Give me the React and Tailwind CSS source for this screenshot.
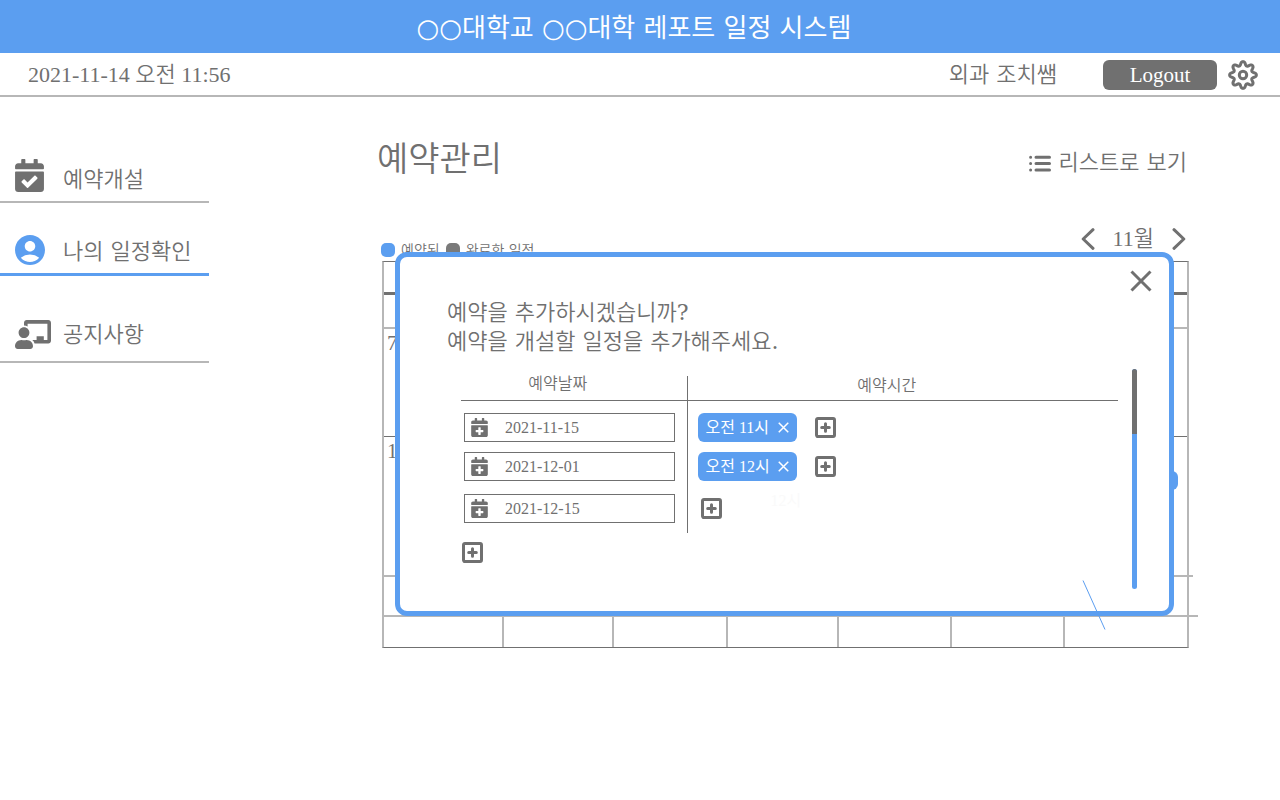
import { FaCalendarCheck, FaCalendarPlus, FaChalkboardTeacher } from "react-icons/fa";
import { MdAccountCircle } from "react-icons/md";

const GEAR_PATH =
  Array.from({ length: 96 }, (_, i) => {
    const a = (i / 96) * Math.PI * 2;
    const wave = Math.cos(8 * a);
    const r = 11.5 + 1.9 * Math.sign(wave) * Math.pow(Math.abs(wave), 0.7);
    return `${i === 0 ? "M" : "L"}${(15 + r * Math.sin(a)).toFixed(2)} ${(15 - r * Math.cos(a)).toFixed(2)}`;
  }).join(" ") + "Z";

const KOREAN = "font-['DejaVu_Serif','Noto_Sans_CJK_KR',serif]";
const MIXED = "font-['Liberation_Serif','Noto_Sans_CJK_KR',serif]";

const SLOTS = [
  { date: "2021-11-15", time: "오전 11시", pad: "pt-3 pb-[10px]" },
  { date: "2021-12-01", time: "오전 12시", pad: "pb-[10px]" },
  { date: "2021-12-15", time: null, pad: "pt-[3px] pb-[10px]" },
];

const WEEKS = [
  { h: "h-[35px]", line: "border-t-[3px] border-[#707070]", day: "" },
  { h: "h-[109px]", line: "border-t-2 border-[#b7b7b7]", day: "7" },
  { h: "h-[139px]", line: "border-t border-[#707070]", day: "14" },
  { h: "h-[40px]", line: "border-t-2 border-[#b7b7b7]", day: "" },
  { h: "h-[32px]", line: "border-t-2 border-[#b7b7b7]", day: "" },
];

function Gear() {
  return (
    <svg viewBox="0 0 30 30" className="size-[30px]" fill="none" stroke="currentColor" strokeWidth="3" strokeLinejoin="round">
      <path d={GEAR_PATH} />
      <circle cx="15" cy="15" r="3.7" />
    </svg>
  );
}

function Chevron({ left }) {
  return (
    <svg viewBox="0 0 14 22" className="h-[22px] w-[14px]" fill="none" stroke="currentColor" strokeWidth="3" strokeLinecap="round" strokeLinejoin="round">
      <path d={left ? "M12 1.7L2.2 11L12 20.3" : "M2 1.7L11.8 11L2 20.3"} />
    </svg>
  );
}

function Cross({ className, width }) {
  return (
    <svg viewBox="0 0 22 22" className={className} fill="none" stroke="currentColor" strokeWidth={width}>
      <path d="M1.5 1.5L20.5 20.5M20.5 1.5L1.5 20.5" />
    </svg>
  );
}

function ListIcon() {
  return (
    <svg viewBox="0 0 22 17" className="h-[17px] w-[22px]" fill="none" stroke="currentColor" strokeWidth="3" strokeLinecap="round">
      <path d="M7 2.2H20.5M7 8.6H20.5M7 15H20.5" />
      <path d="M1.6 2.2h.01M1.6 8.6h.01M1.6 15h.01" />
    </svg>
  );
}

function AddButton({ label }) {
  return (
    <button type="button" aria-label={label} className="block">
      <svg viewBox="0 0 21 21" className="size-[21px]" fill="none" stroke="currentColor" strokeWidth="3" strokeLinecap="round">
        <rect x="1.5" y="1.5" width="18" height="18" rx="1.4" />
        <path d="M6.7 10.5H14.3M10.5 6.7V14.3" />
      </svg>
    </button>
  );
}

function SideLink({ icon, children, className, iconClass }) {
  return (
    <a href="#" className={`flex items-end pl-[15px] ${className}`}>
      <span className={`w-12 shrink-0 ${iconClass}`}>{icon}</span>
      <span className="text-[22px] leading-7 whitespace-nowrap">{children}</span>
    </a>
  );
}

function Dialog() {
  return (
    <section
      role="dialog"
      aria-label="예약 추가"
      className="absolute -top-[9px] right-[15px] left-[13px] h-[364px] rounded-xl border-[5px] border-[#5b9ef0] bg-white"
    >
      <div className="flex h-full justify-between">
        <div className="min-w-0 flex-1 pt-[41px] pl-[47px]">
          <p className="text-[22px] leading-[29px]">
            예약을 추가하시겠습니까?
            <br />
            예약을 개설할 일정을 추가해주세요.
          </p>
          <div className="mt-5 pl-[14px]">
            <table className="w-full border-collapse">
              <thead>
                <tr className="border-b border-[#707070] text-base leading-4">
                  <th className="w-[226px] border-r border-[#707070] pt-0 pr-8 pb-2 font-[350]">예약날짜</th>
                  <th className="pt-0 pr-8 pb-1 font-[350]">예약시간</th>
                </tr>
              </thead>
              <tbody className={MIXED}>
                {SLOTS.map((slot, i) => (
                  <tr key={slot.date}>
                    <td className={`border-r border-[#707070] pr-3 pl-[3px] ${slot.pad}`}>
                      <label className="flex h-[29px] items-center border border-[#707070] pl-1.5">
                        <FaCalendarPlus className="h-[19px] w-[17px] shrink-0" />
                        <input
                          aria-label={`예약날짜 ${i + 1}`}
                          defaultValue={slot.date}
                          className="ml-[17px] w-full min-w-0 bg-transparent text-base leading-6 outline-none"
                        />
                      </label>
                    </td>
                    <td className={`pl-[10px] ${slot.pad}`}>
                      {slot.time ? (
                        <div className="flex h-[29px] items-center gap-[18px]">
                          <button type="button" className="flex h-[29px] w-[99px] items-center justify-between rounded-md bg-[#5b9ef0] px-2 text-base leading-5 font-normal whitespace-nowrap text-white">
                            {slot.time}
                            <Cross className="size-[11px]" width="3" />
                          </button>
                          <AddButton label="시간 추가" />
                        </div>
                      ) : (
                        <div className="flex h-[29px] items-center gap-[49px] pl-[3px]">
                          <AddButton label="시간 추가" />
                          <span className="pb-4 text-base leading-4 text-[#fafafa]">12시</span>
                        </div>
                      )}
                    </td>
                  </tr>
                ))}
              </tbody>
            </table>
            <div className="mt-[9px] pl-px">
              <AddButton label="날짜 추가" />
            </div>
          </div>
        </div>
        <div className="flex w-[51px] flex-col items-end pt-[13px] pr-[17px]">
          <button type="button" aria-label="닫기" className="size-[22px]">
            <Cross className="size-[22px]" width="3" />
          </button>
          <div className="mt-[77px] mr-[15px] h-[220px] w-[5px] overflow-hidden rounded-sm bg-[#5b9ef0]">
            <div className="h-[65px] bg-[#707070]" />
          </div>
        </div>
      </div>
      <svg viewBox="0 0 24 50" className="absolute right-[63px] -bottom-[19px] h-[50px] w-6" stroke="#5b9ef0" strokeWidth="1">
        <path d="M1 0.5L23 49.5" />
      </svg>
    </section>
  );
}

export default function App() {
  return (
    <div className={`min-h-screen bg-white font-[350] text-[#707070] ${KOREAN}`}>
      <header>
        <h1 className="flex h-[53px] items-center justify-center bg-[#5b9ef0] pt-0.5 pr-3 text-[26px] leading-9 font-normal text-white">
          ○○대학교 ○○대학 레포트 일정 시스템
        </h1>
        <div className="flex h-11 items-center justify-between border-b-2 border-[#b7b7b7] pt-0.5 pr-[22px] pl-7">
          <time className={`text-[22px] leading-7 ${MIXED}`}>2021-11-14 오전 11:56</time>
          <div className="flex items-center gap-[11px]">
            <span className="mr-[35px] text-[22px] leading-7">외과 조치쌤</span>
            <button type="button" className={`h-[30px] w-[114px] rounded-md bg-[#707070] text-[21px] leading-7 text-white ${MIXED}`}>
              Logout
            </button>
            <button type="button" aria-label="설정">
              <Gear />
            </button>
          </div>
        </div>
      </header>

      <div className="flex">
        <nav className="w-[209px] shrink-0 pt-[62px]">
          <SideLink className="border-b-2 border-[#b7b7b7] pb-[7px]" iconClass="pb-0.5" icon={<FaCalendarCheck className="h-[33px] w-[29px]" />}>
            예약개설
          </SideLink>
          <SideLink
            className="mt-8 border-b-[3px] border-[#5b9ef0] pb-[7px]"
            iconClass="pb-px"
            icon={<MdAccountCircle viewBox="2 2 20 20" className="size-[30px] text-[#5b9ef0]" />}
          >
            나의 일정확인
          </SideLink>
          <SideLink className="mt-11 border-b-2 border-[#b7b7b7] pb-3" iconClass="" icon={<FaChalkboardTeacher className="h-[29px] w-9" />}>
            공지사항
          </SideLink>
        </nav>

        <main className="min-w-0 flex-1 pt-[37px] pr-[91px] pl-[168px]">
          <div className="flex items-center justify-between">
            <h2 className="text-[34px] leading-[50px] font-[350]">예약관리</h2>
            <a href="#" className="flex items-center gap-2 pt-2 pr-0.5 text-[22px] leading-7">
              <ListIcon />
              리스트로 보기
            </a>
          </div>

          <div className="ml-1 flex h-[77px] items-end justify-between">
            <div className="flex items-center gap-[6px] pb-px text-sm leading-5">
              <span className="size-[14px] rounded-[5px] bg-[#5b9ef0]" />
              <span>예약된</span>
              <span className="size-[14px] rounded-[5px] bg-[#7a7a7a]" />
              <span>완료한 일정</span>
            </div>
            <div className={`flex items-center gap-[18px] pr-[3px] pb-2 text-[22px] leading-7 ${MIXED}`}>
              <button type="button" aria-label="이전 달">
                <Chevron left />
              </button>
              <span>11월</span>
              <button type="button" aria-label="다음 달">
                <Chevron />
              </button>
            </div>
          </div>

          <div className="relative ml-[5px]">
            <table className="w-full table-fixed border-separate border-spacing-0 border-x-2 border-t border-b border-x-[#b7b7b7] border-y-[#707070]">
              <colgroup>
                <col className="w-[15%]" />
                <col className="w-[13.6%]" />
                <col className="w-[14.2%]" />
                <col className="w-[13.9%]" />
                <col className="w-[14%]" />
                <col className="w-[14.1%]" />
                <col />
              </colgroup>
              <tbody>
                <tr className="h-[30px]">
                  <td colSpan={7} />
                </tr>
                {WEEKS.map((week, i) => (
                  <tr key={i} className={week.h}>
                    {Array.from({ length: 7 }, (_, d) => (
                      <td
                        key={d}
                        className={`p-0 pl-[3px] align-top text-[21px] leading-7 ${MIXED} ${week.line} ${
                          i === 4 && d < 6 ? "border-r-2" : ""
                        }`}
                      >
                        {d === 0 ? week.day : ""}
                      </td>
                    ))}
                  </tr>
                ))}
              </tbody>
            </table>
            <span className="absolute top-[314px] -right-1 h-0.5 w-1 bg-[#b7b7b7]" />
            <span className="absolute top-[354px] -right-[9px] h-0.5 w-[9px] bg-[#b7b7b7]" />
            <span className="absolute top-[210px] right-[11px] h-[19px] w-8 rounded-md bg-[#5b9ef0]" />
            <Dialog />
          </div>
        </main>
      </div>
    </div>
  );
}
